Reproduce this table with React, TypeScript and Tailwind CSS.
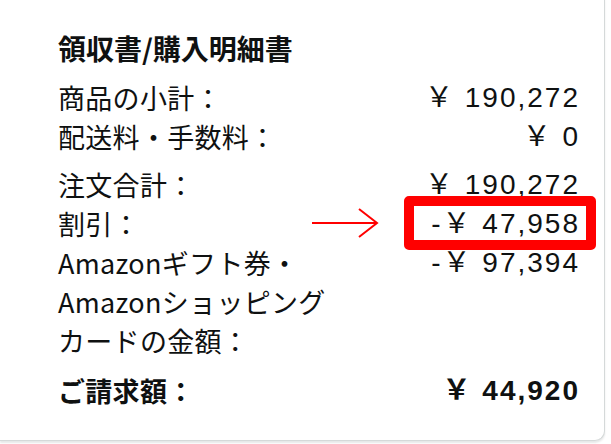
import React from 'react';

const font = { fontFamily: '"Noto Sans CJK JP", "Noto Sans", sans-serif' };
const numFont = { fontFamily: '"Liberation Sans", "Noto Sans CJK JP", sans-serif' };

const Row = ({ label, value, className = '' }: { label: React.ReactNode; value: React.ReactNode; className?: string }) => (
  <div className={`flex items-start justify-between ${className}`}>
    <div className="tracking-[0.3px]">{label}</div>
    <div className="text-right whitespace-pre text-[28px] tracking-[2px] -mr-[2px]" style={numFont}>
      {value}
    </div>
  </div>
);

export default function App() {
  return (
    <div className="w-[611px] h-[444px] overflow-hidden bg-white" style={font}>
      <div className="w-[605px] h-[451px] -mt-[10px] bg-white border-r border-b border-[#d5d9d9] rounded-br-[10px] rounded-tr-[10px] shadow-[0_2px_2px_rgba(213,217,217,0.6)] pl-[58px] pr-[26px] pt-[38px] text-[#0f1111]">
        <h1 className="text-[28px] leading-[40px] font-bold mb-[10px]">領収書/購入明細書</h1>

        <div className="text-[27px] leading-[39px]">
          <Row label="商品の小計：" value="￥ 190,272" />
          <Row label="配送料・手数料：" value="￥ 0" />

          <div className="mt-[9px]">
            <Row label="注文合計：" value="￥ 190,272" />
            <div className="relative">
              <Row
                label="割引："
                value={
                  <span className="relative inline-block">
                    -￥ 47,958
                    <span className="absolute -right-[16px] -top-[8px] w-[192px] h-[54px] border-[10px] border-[#ff0000] rounded-[5px]" />
                  </span>
                }
              />
              <svg className="absolute left-[254px] top-[3px]" width="68" height="32" viewBox="0 0 68 32" fill="none">
                <line x1="0" y1="16" x2="65" y2="16" stroke="#ff0000" strokeWidth="2" />
                <polyline points="47,2 65,16 47,30" stroke="#ff0000" strokeWidth="2" fill="none" />
              </svg>
            </div>
            <Row
              label={
                <>
                  Amazonギフト券・
                  <br />
                  Amazonショッピング
                  <br />
                  カードの金額：
                </>
              }
              value="-￥ 97,394"
            />
          </div>

          <Row className="mt-[11px] font-bold" label="ご請求額：" value="￥ 44,920" />
        </div>
      </div>
    </div>
  );
}
